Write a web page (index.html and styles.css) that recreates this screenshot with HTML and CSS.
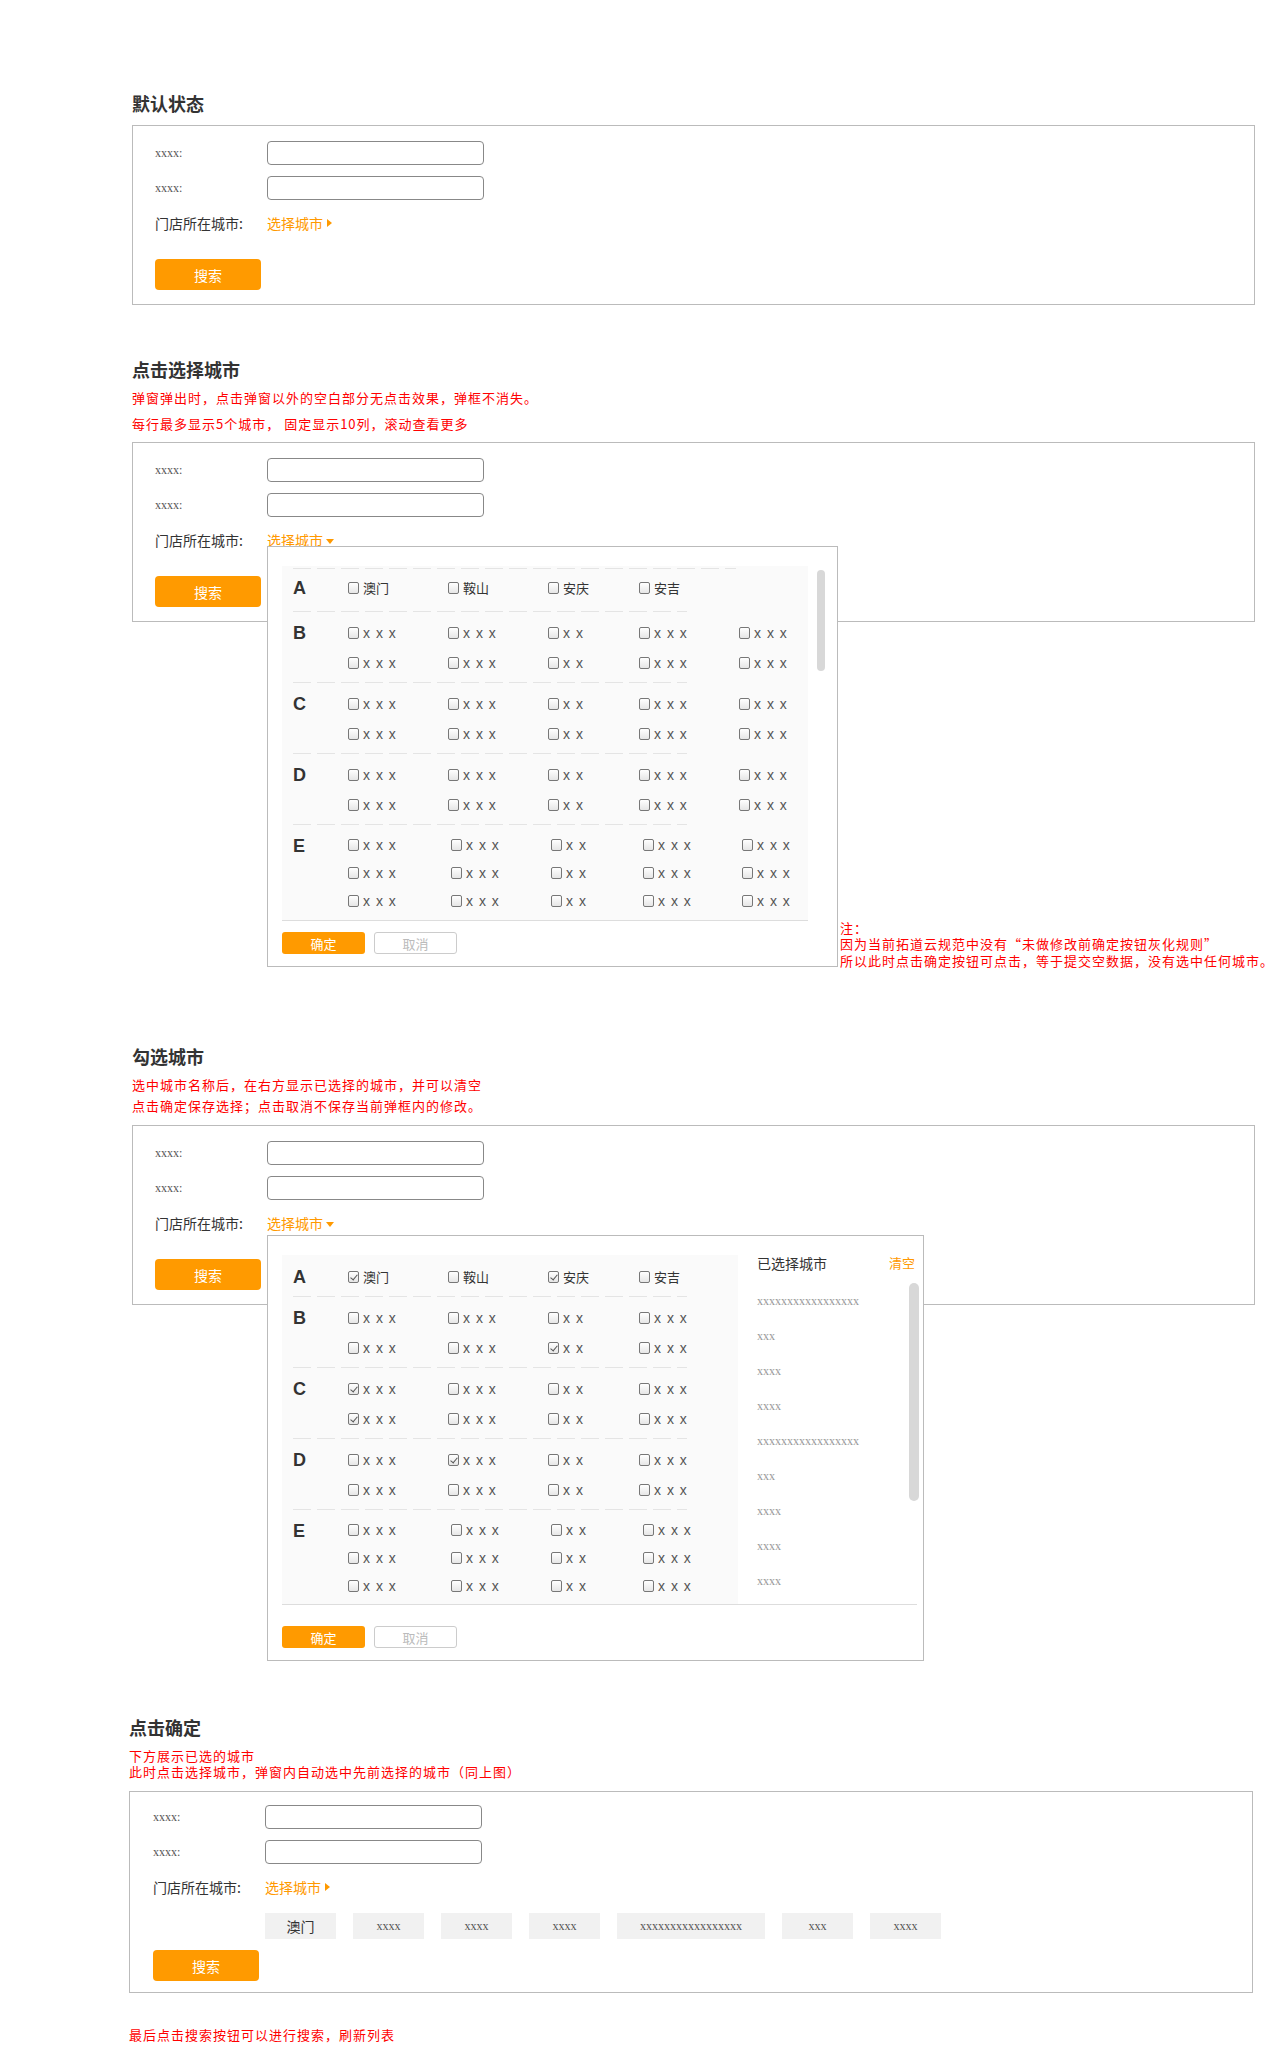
FILE: index.html
```html
<!DOCTYPE html>
<html lang="zh-CN">
<head>
    <meta charset="UTF-8">
    <title>门店城市选择 交互说明</title>
    <link rel="stylesheet" href="styles.css">
</head>
<body>
<div class="page">

    <!-- 1. 默认状态 -->
    <section class="demo">
        <h2 class="demo-title">默认状态</h2>
        <div class="form-box">
            <div class="form-row"><span class="form-label x-text">xxxx:</span><input class="text-input" type="text"></div>
            <div class="form-row"><span class="form-label x-text">xxxx:</span><input class="text-input" type="text"></div>
            <div class="form-row"><span class="form-label">门店所在城市:</span><span class="city-link">选择城市<i class="arrow-right"></i></span></div>
            <button class="btn-search">搜索</button>
        </div>
    </section>

    <!-- 2. 点击选择城市 -->
    <section class="demo demo-open">
        <h2 class="demo-title">点击选择城市</h2>
        <div class="demo-notes notes-loose">
            <p>弹窗弹出时，点击弹窗以外的空白部分无点击效果，弹框不消失。</p>
            <p>每行最多显示5个城市， 固定显示10列，滚动查看更多</p>
        </div>
        <div class="form-box">
            <div class="form-row"><span class="form-label x-text">xxxx:</span><input class="text-input" type="text"></div>
            <div class="form-row"><span class="form-label x-text">xxxx:</span><input class="text-input" type="text"></div>
            <div class="form-row"><span class="form-label">门店所在城市:</span><span class="city-link">选择城市<i class="arrow-down"></i></span></div>
            <button class="btn-search">搜索</button>

            <div class="pop-wrap">
                <div class="city-pop">
                    <div class="pop-body">
                        <div class="city-scroll">
                            <div class="city-groups city-groups--lined">
                                <div class="city-group">
                                    <div class="group-letter">A</div>
                                    <div class="group-items">
                                        <label class="city-item"><i class="check"></i>澳门</label>
                                        <label class="city-item"><i class="check"></i>鞍山</label>
                                        <label class="city-item"><i class="check"></i>安庆</label>
                                        <label class="city-item"><i class="check"></i>安吉</label>
                                    </div>
                                </div>
                                <div class="city-group">
                                    <div class="group-letter">B</div>
                                    <div class="group-items">
                                        <label class="city-item"><i class="check"></i><span class="x-name">x x x</span></label>
                                        <label class="city-item"><i class="check"></i><span class="x-name">x x x</span></label>
                                        <label class="city-item"><i class="check"></i><span class="x-name">x x</span></label>
                                        <label class="city-item"><i class="check"></i><span class="x-name">x x x</span></label>
                                        <label class="city-item"><i class="check"></i><span class="x-name">x x x</span></label>
                                        <label class="city-item"><i class="check"></i><span class="x-name">x x x</span></label>
                                        <label class="city-item"><i class="check"></i><span class="x-name">x x x</span></label>
                                        <label class="city-item"><i class="check"></i><span class="x-name">x x</span></label>
                                        <label class="city-item"><i class="check"></i><span class="x-name">x x x</span></label>
                                        <label class="city-item"><i class="check"></i><span class="x-name">x x x</span></label>
                                    </div>
                                </div>
                                <div class="city-group">
                                    <div class="group-letter">C</div>
                                    <div class="group-items">
                                        <label class="city-item"><i class="check"></i><span class="x-name">x x x</span></label>
                                        <label class="city-item"><i class="check"></i><span class="x-name">x x x</span></label>
                                        <label class="city-item"><i class="check"></i><span class="x-name">x x</span></label>
                                        <label class="city-item"><i class="check"></i><span class="x-name">x x x</span></label>
                                        <label class="city-item"><i class="check"></i><span class="x-name">x x x</span></label>
                                        <label class="city-item"><i class="check"></i><span class="x-name">x x x</span></label>
                                        <label class="city-item"><i class="check"></i><span class="x-name">x x x</span></label>
                                        <label class="city-item"><i class="check"></i><span class="x-name">x x</span></label>
                                        <label class="city-item"><i class="check"></i><span class="x-name">x x x</span></label>
                                        <label class="city-item"><i class="check"></i><span class="x-name">x x x</span></label>
                                    </div>
                                </div>
                                <div class="city-group">
                                    <div class="group-letter">D</div>
                                    <div class="group-items">
                                        <label class="city-item"><i class="check"></i><span class="x-name">x x x</span></label>
                                        <label class="city-item"><i class="check"></i><span class="x-name">x x x</span></label>
                                        <label class="city-item"><i class="check"></i><span class="x-name">x x</span></label>
                                        <label class="city-item"><i class="check"></i><span class="x-name">x x x</span></label>
                                        <label class="city-item"><i class="check"></i><span class="x-name">x x x</span></label>
                                        <label class="city-item"><i class="check"></i><span class="x-name">x x x</span></label>
                                        <label class="city-item"><i class="check"></i><span class="x-name">x x x</span></label>
                                        <label class="city-item"><i class="check"></i><span class="x-name">x x</span></label>
                                        <label class="city-item"><i class="check"></i><span class="x-name">x x x</span></label>
                                        <label class="city-item"><i class="check"></i><span class="x-name">x x x</span></label>
                                    </div>
                                </div>
                                <div class="city-group">
                                    <div class="group-letter">E</div>
                                    <div class="group-items group-items--e">
                                        <label class="city-item"><i class="check"></i><span class="x-name">x x x</span></label>
                                        <label class="city-item"><i class="check"></i><span class="x-name">x x x</span></label>
                                        <label class="city-item"><i class="check"></i><span class="x-name">x x</span></label>
                                        <label class="city-item"><i class="check"></i><span class="x-name">x x x</span></label>
                                        <label class="city-item"><i class="check"></i><span class="x-name">x x x</span></label>
                                        <label class="city-item"><i class="check"></i><span class="x-name">x x x</span></label>
                                        <label class="city-item"><i class="check"></i><span class="x-name">x x x</span></label>
                                        <label class="city-item"><i class="check"></i><span class="x-name">x x</span></label>
                                        <label class="city-item"><i class="check"></i><span class="x-name">x x x</span></label>
                                        <label class="city-item"><i class="check"></i><span class="x-name">x x x</span></label>
                                        <label class="city-item"><i class="check"></i><span class="x-name">x x x</span></label>
                                        <label class="city-item"><i class="check"></i><span class="x-name">x x x</span></label>
                                        <label class="city-item"><i class="check"></i><span class="x-name">x x</span></label>
                                        <label class="city-item"><i class="check"></i><span class="x-name">x x x</span></label>
                                        <label class="city-item"><i class="check"></i><span class="x-name">x x x</span></label>
                                    </div>
                                </div>
                            </div>
                        </div>
                        <div class="scroll-track scroll-track--outer"><div class="scroll-thumb"></div></div>
                    </div>
                    <div class="pop-foot">
                        <button class="btn-ok">确定</button>
                        <button class="btn-cancel">取消</button>
                    </div>
                </div>
                <div class="pop-note">
                    <p>注：</p>
                    <p>因为当前拓道云规范中没有“未做修改前确定按钮灰化规则”</p>
                    <p>所以此时点击确定按钮可点击，等于提交空数据，没有选中任何城市。</p>
                </div>
            </div>
        </div>
    </section>

    <!-- 3. 勾选城市 -->
    <section class="demo demo-picked">
        <h2 class="demo-title">勾选城市</h2>
        <div class="demo-notes notes-snug">
            <p>选中城市名称后，在右方显示已选择的城市，并可以清空</p>
            <p>点击确定保存选择；点击取消不保存当前弹框内的修改。</p>
        </div>
        <div class="form-box">
            <div class="form-row"><span class="form-label x-text">xxxx:</span><input class="text-input" type="text"></div>
            <div class="form-row"><span class="form-label x-text">xxxx:</span><input class="text-input" type="text"></div>
            <div class="form-row"><span class="form-label">门店所在城市:</span><span class="city-link">选择城市<i class="arrow-down"></i></span></div>
            <button class="btn-search">搜索</button>

            <div class="pop-wrap pop-wrap--picked">
                <div class="city-pop city-pop--picked">
                    <div class="pop-body">
                        <div class="city-scroll city-scroll--narrow">
                            <div class="city-groups">
                                <div class="city-group">
                                    <div class="group-letter">A</div>
                                    <div class="group-items group-items--four">
                                        <label class="city-item"><i class="check is-checked"></i>澳门</label>
                                        <label class="city-item"><i class="check"></i>鞍山</label>
                                        <label class="city-item"><i class="check is-checked"></i>安庆</label>
                                        <label class="city-item"><i class="check"></i>安吉</label>
                                    </div>
                                </div>
                                <div class="city-group">
                                    <div class="group-letter">B</div>
                                    <div class="group-items group-items--four">
                                        <label class="city-item"><i class="check"></i><span class="x-name">x x x</span></label>
                                        <label class="city-item"><i class="check"></i><span class="x-name">x x x</span></label>
                                        <label class="city-item"><i class="check"></i><span class="x-name">x x</span></label>
                                        <label class="city-item"><i class="check"></i><span class="x-name">x x x</span></label>
                                        <label class="city-item"><i class="check"></i><span class="x-name">x x x</span></label>
                                        <label class="city-item"><i class="check"></i><span class="x-name">x x x</span></label>
                                        <label class="city-item"><i class="check is-checked"></i><span class="x-name">x x</span></label>
                                        <label class="city-item"><i class="check"></i><span class="x-name">x x x</span></label>
                                    </div>
                                </div>
                                <div class="city-group">
                                    <div class="group-letter">C</div>
                                    <div class="group-items group-items--four">
                                        <label class="city-item"><i class="check is-checked"></i><span class="x-name">x x x</span></label>
                                        <label class="city-item"><i class="check"></i><span class="x-name">x x x</span></label>
                                        <label class="city-item"><i class="check"></i><span class="x-name">x x</span></label>
                                        <label class="city-item"><i class="check"></i><span class="x-name">x x x</span></label>
                                        <label class="city-item"><i class="check is-checked"></i><span class="x-name">x x x</span></label>
                                        <label class="city-item"><i class="check"></i><span class="x-name">x x x</span></label>
                                        <label class="city-item"><i class="check"></i><span class="x-name">x x</span></label>
                                        <label class="city-item"><i class="check"></i><span class="x-name">x x x</span></label>
                                    </div>
                                </div>
                                <div class="city-group">
                                    <div class="group-letter">D</div>
                                    <div class="group-items group-items--four">
                                        <label class="city-item"><i class="check"></i><span class="x-name">x x x</span></label>
                                        <label class="city-item"><i class="check is-checked"></i><span class="x-name">x x x</span></label>
                                        <label class="city-item"><i class="check"></i><span class="x-name">x x</span></label>
                                        <label class="city-item"><i class="check"></i><span class="x-name">x x x</span></label>
                                        <label class="city-item"><i class="check"></i><span class="x-name">x x x</span></label>
                                        <label class="city-item"><i class="check"></i><span class="x-name">x x x</span></label>
                                        <label class="city-item"><i class="check"></i><span class="x-name">x x</span></label>
                                        <label class="city-item"><i class="check"></i><span class="x-name">x x x</span></label>
                                    </div>
                                </div>
                                <div class="city-group">
                                    <div class="group-letter">E</div>
                                    <div class="group-items group-items--four group-items--e">
                                        <label class="city-item"><i class="check"></i><span class="x-name">x x x</span></label>
                                        <label class="city-item"><i class="check"></i><span class="x-name">x x x</span></label>
                                        <label class="city-item"><i class="check"></i><span class="x-name">x x</span></label>
                                        <label class="city-item"><i class="check"></i><span class="x-name">x x x</span></label>
                                        <label class="city-item"><i class="check"></i><span class="x-name">x x x</span></label>
                                        <label class="city-item"><i class="check"></i><span class="x-name">x x x</span></label>
                                        <label class="city-item"><i class="check"></i><span class="x-name">x x</span></label>
                                        <label class="city-item"><i class="check"></i><span class="x-name">x x x</span></label>
                                        <label class="city-item"><i class="check"></i><span class="x-name">x x x</span></label>
                                        <label class="city-item"><i class="check"></i><span class="x-name">x x x</span></label>
                                        <label class="city-item"><i class="check"></i><span class="x-name">x x</span></label>
                                        <label class="city-item"><i class="check"></i><span class="x-name">x x x</span></label>
                                    </div>
                                </div>
                            </div>
                            <div class="scroll-track scroll-track--inner"><div class="scroll-thumb"></div></div>
                        </div>
                        <div class="picked-panel">
                            <div class="picked-head">
                                <span>已选择城市</span>
                                <span class="picked-clear">清空</span>
                            </div>
                            <div class="picked-body">
                                <ul class="picked-list">
                                    <li>xxxxxxxxxxxxxxxxx</li>
                                    <li>xxx</li>
                                    <li>xxxx</li>
                                    <li>xxxx</li>
                                    <li>xxxxxxxxxxxxxxxxx</li>
                                    <li>xxx</li>
                                    <li>xxxx</li>
                                    <li>xxxx</li>
                                    <li>xxxx</li>
                                </ul>
                                <div class="scroll-track scroll-track--list"><div class="scroll-thumb"></div></div>
                            </div>
                        </div>
                    </div>
                    <div class="pop-foot">
                        <button class="btn-ok">确定</button>
                        <button class="btn-cancel">取消</button>
                    </div>
                </div>
            </div>
        </div>
    </section>

    <!-- 4. 点击确定 -->
    <section class="demo demo-confirm">
        <h2 class="demo-title">点击确定</h2>
        <div class="demo-notes notes-tight">
            <p>下方展示已选的城市</p>
            <p>此时点击选择城市，弹窗内自动选中先前选择的城市（同上图）</p>
        </div>
        <div class="form-box">
            <div class="form-row"><span class="form-label x-text">xxxx:</span><input class="text-input" type="text"></div>
            <div class="form-row"><span class="form-label x-text">xxxx:</span><input class="text-input" type="text"></div>
            <div class="form-row"><span class="form-label">门店所在城市:</span><span class="city-link">选择城市<i class="arrow-right"></i></span></div>
            <div class="tag-list">
                <span class="tag tag-city">澳门</span>
                <span class="tag">xxxx</span>
                <span class="tag">xxxx</span>
                <span class="tag">xxxx</span>
                <span class="tag">xxxxxxxxxxxxxxxxx</span>
                <span class="tag">xxx</span>
                <span class="tag">xxxx</span>
            </div>
            <button class="btn-search">搜索</button>
        </div>
        <p class="final-note">最后点击搜索按钮可以进行搜索，刷新列表</p>
    </section>

</div>
</body>
</html>
```

FILE: styles.css
```css
* {
    box-sizing: border-box;
}
body {
    margin: 0;
    background-color: #fff;
    color: #333;
    font-family: "Noto Sans CJK SC", "Liberation Sans", sans-serif;
    font-size: 14px;
}
.page {
    padding: 91px 0 0 132px;
}

/* section heads */
.demo-title {
    margin: 0 0 10px;
    font-size: 18px;
    line-height: 24px;
    font-weight: bold;
    color: #333;
}
.demo-open {
    margin-top: 52px;
}
.demo-picked {
    margin-top: 422px;
}
.demo-confirm {
    margin-top: 410px;
    margin-left: -3px;
}
.demo-notes {
    color: #f00;
    font-size: 13px;
    letter-spacing: 1px;
}
.demo-notes p {
    margin: 0;
    line-height: 20px;
}
.demo-title + .demo-notes {
    margin-top: -3px;
}
.notes-loose {
    margin-bottom: 8px;
}
.notes-loose p + p {
    margin-top: 6px;
}
.notes-snug {
    margin-bottom: 9px;
}
.notes-snug p + p {
    margin-top: 1px;
}
.demo-title + .notes-tight {
    margin-top: -1px;
    margin-bottom: 11px;
}
.notes-tight p {
    line-height: 16px;
}
.final-note {
    margin: 32px 0 0;
    color: #f00;
    font-size: 13px;
    letter-spacing: 1px;
    line-height: 20px;
}

/* search form */
.form-box {
    position: relative;
    width: 1123px;
    border: 1px solid #bbb;
    padding: 15px 0 14px 22px;
}
.demo-confirm .form-box {
    width: 1124px;
    padding: 13px 0 11px 23px;
}
.form-row {
    display: flex;
    align-items: center;
    height: 24px;
    margin-bottom: 11px;
}
.form-label {
    width: 112px;
    flex: none;
    font-size: 14px;
    color: #333;
}
.x-text {
    font-family: "Liberation Serif", serif;
    font-size: 12px;
    color: #555;
}
.text-input {
    width: 217px;
    height: 24px;
    border: 1px solid #888;
    border-radius: 4px;
    padding: 0 6px;
    outline: none;
}
.city-link {
    display: flex;
    align-items: center;
    color: #f90;
    font-size: 14px;
    cursor: pointer;
}
.arrow-right {
    width: 0;
    height: 0;
    margin-left: 4px;
    border-left: 5px solid #f90;
    border-top: 4px solid transparent;
    border-bottom: 4px solid transparent;
}
.arrow-down {
    width: 0;
    height: 0;
    margin: 2px 0 0 3px;
    border-top: 5px solid #f90;
    border-left: 4px solid transparent;
    border-right: 4px solid transparent;
}
/* margins collapse with the row above: 24px total gap */
.btn-search {
    display: block;
    width: 106px;
    height: 31px;
    margin-top: 24px;
    padding: 0;
    border: 0;
    border-radius: 4px;
    background-color: #ff9a00;
    color: #fff;
    font-family: inherit;
    font-size: 14px;
}
.tag-list {
    display: flex;
    gap: 17px;
    margin: 14px 0 0 112px;
}
.tag-list + .btn-search {
    margin-top: 11px;
}
.tag {
    display: flex;
    align-items: center;
    justify-content: center;
    height: 26px;
    min-width: 71px;
    padding: 0 23px;
    background-color: #f1f1f1;
    font-family: "Liberation Serif", serif;
    font-size: 12px;
    color: #555;
}
.tag-city {
    padding: 0 20px;
    font-family: "Noto Sans CJK SC", sans-serif;
    font-size: 14px;
    color: #333;
}

/* city popup */
.pop-wrap {
    position: absolute;
    left: 134px;
    top: 103px;
    z-index: 2;
    display: flex;
    align-items: flex-end;
}
.pop-wrap--picked {
    top: 109px;
}
.city-pop {
    width: 571px;
    border: 1px solid #bbb;
    background-color: #fff;
    padding: 19px 0 12px 14px;
}
.city-pop--picked {
    width: 657px;
}
.pop-body {
    display: flex;
}
.city-scroll {
    display: flex;
    width: 526px;
    height: 354px;
    overflow: hidden;
    background-color: #fafafa;
}
.city-scroll--narrow {
    width: 456px;
    height: 349px;
}
.city-groups {
    flex: 1;
}
.city-groups--lined {
    padding-top: 2px;
    background: repeating-linear-gradient(to right, #e4e4e4 0 18px, transparent 18px 24px) 11px 2px / 443px 1px no-repeat;
}
.city-group {
    display: flex;
    padding: 6px 0 5px 11px;
    background: repeating-linear-gradient(to right, #e4e4e4 0 18px, transparent 18px 24px) 11px 100% / 394px 1px no-repeat;
}
.city-group:first-child {
    padding-top: 7px;
}
.city-groups--lined .city-group:first-child {
    padding: 5px 0 9px 11px;
}
.city-group:last-child {
    background: none;
}
.group-letter {
    width: 55px;
    flex: none;
    line-height: 30px;
    font-family: "Liberation Sans", sans-serif;
    font-size: 18px;
    font-weight: bold;
    color: #333;
}
.group-items {
    display: grid;
    grid-template-columns: 100px 100px 91px 100px 80px;
    grid-auto-rows: 30px;
    align-items: center;
}
.group-items--e {
    grid-template-columns: 103px 100px 92px 99px 80px;
    grid-auto-rows: 28px;
}
.group-items--four {
    grid-template-columns: 100px 100px 91px 100px;
}
.group-items--four.group-items--e {
    grid-template-columns: 103px 100px 92px 99px;
}
.city-item {
    display: flex;
    align-items: center;
    gap: 4px;
    font-size: 13px;
    line-height: 16px;
    color: #333;
}
.check {
    position: relative;
    flex: none;
    width: 11px;
    height: 12px;
    border: 1px solid #777;
    border-radius: 2px;
    background: linear-gradient(#fff, #e6e6e6);
}
.check.is-checked::after {
    content: "";
    position: absolute;
    left: 3px;
    top: 1px;
    width: 3px;
    height: 6px;
    border: solid #555;
    border-width: 0 1.5px 1.5px 0;
    transform: rotate(40deg);
}
.x-name {
    font-family: "Liberation Sans", sans-serif;
    font-size: 14px;
    letter-spacing: 1px;
    color: #555;
}
.scroll-track {
    flex: none;
}
.scroll-thumb {
    background-color: #d8d8d8;
    border-radius: 5px;
}
.scroll-track--outer {
    width: 8px;
    margin-left: 9px;
    padding-top: 4px;
}
.scroll-track--outer .scroll-thumb {
    height: 101px;
}
.scroll-track--inner {
    width: 10px;
    margin-right: 7px;
    padding-top: 4px;
}
.scroll-track--inner .scroll-thumb {
    height: 102px;
}
.scroll-track--list {
    width: 10px;
    margin-right: 4px;
}
.scroll-track--list .scroll-thumb {
    height: 218px;
}

/* picked cities */
.picked-panel {
    flex: 1;
}
.picked-head {
    display: flex;
    justify-content: space-between;
    padding: 0 8px 0 19px;
    line-height: 16px;
    font-size: 14px;
    color: #333;
}
.picked-clear {
    font-size: 13px;
    color: #f90;
}
.picked-body {
    display: flex;
    margin-top: 12px;
    padding-left: 19px;
}
.picked-list {
    flex: 1;
    margin: 0;
    padding: 1px 0 0;
    list-style: none;
}
.picked-list li {
    line-height: 35px;
    font-family: "Liberation Serif", serif;
    font-size: 12px;
    color: #999;
}

.pop-foot {
    display: flex;
    gap: 9px;
    width: 526px;
    padding-top: 11px;
    border-top: 1px solid #ddd;
}
.city-pop--picked .pop-foot {
    width: 635px;
    padding-top: 21px;
}
.btn-ok,
.btn-cancel {
    width: 83px;
    height: 22px;
    padding: 0;
    border-radius: 3px;
    font-family: inherit;
    font-size: 13px;
}
.btn-ok {
    border: 0;
    background-color: #ff9a00;
    color: #fff;
}
.btn-cancel {
    border: 1px solid #ccc;
    background-color: #fff;
    color: #bbb;
}
.pop-note {
    margin: 0 0 -2px 2px;
    color: #f00;
    font-size: 13px;
    letter-spacing: 1px;
    white-space: nowrap;
}
.pop-note p {
    margin: 0;
    line-height: 16.5px;
}
```
